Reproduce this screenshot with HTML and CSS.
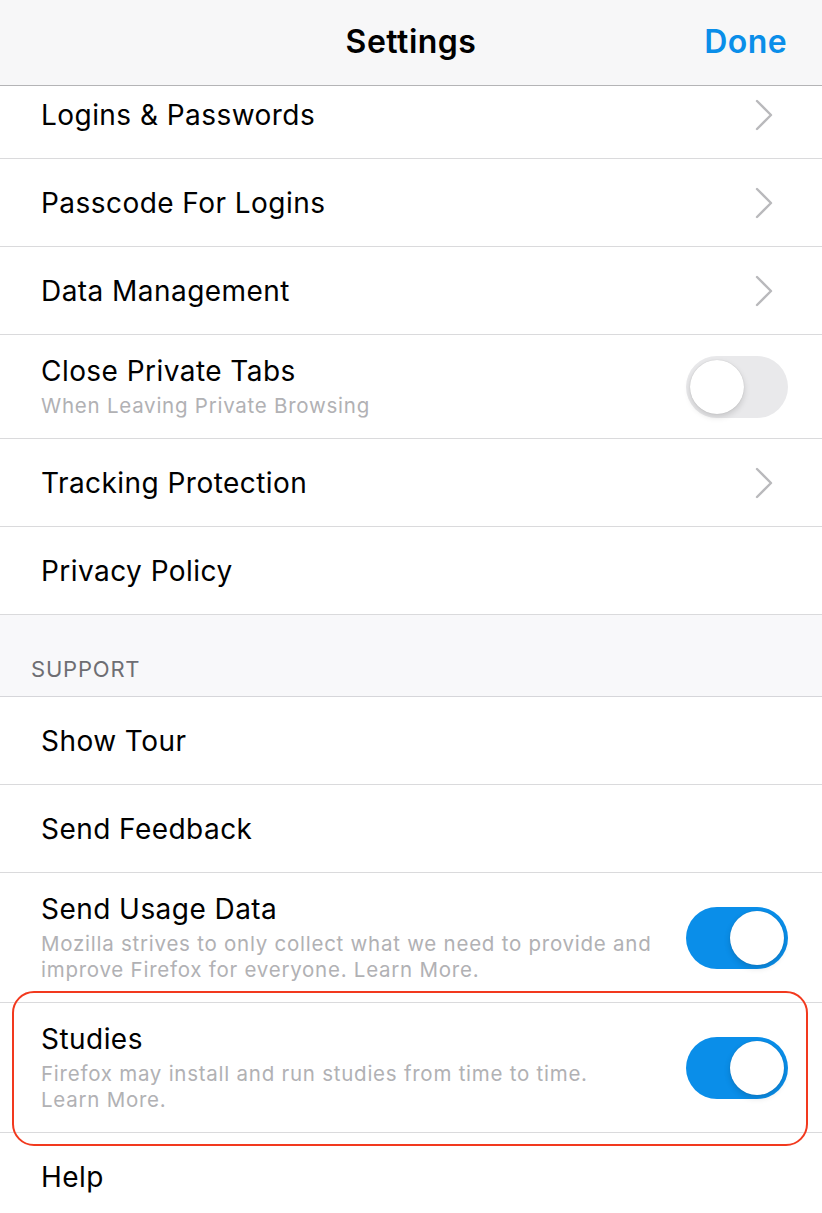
FILE: index.html
```html
<!DOCTYPE html>
<html lang="en">
<head>
<meta charset="utf-8">
<title>Settings</title>
<link rel="stylesheet" href="styles.css">
</head>
<body>
<div class="screen">
  <header class="navbar">
    <div class="nav-side"></div>
    <h1 class="nav-title">Settings</h1>
    <div class="nav-side nav-right"><span class="nav-done">Done</span></div>
  </header>
  <main class="viewport">
    <div class="list">
      <div class="row"><span class="row-title">Logins &amp; Passwords</span><svg class="chevron" viewBox="0 0 18 32"><path d="M2 2 L16 16 L2 30" /></svg></div>
      <div class="row"><span class="row-title">Passcode For Logins</span><svg class="chevron" viewBox="0 0 18 32"><path d="M2 2 L16 16 L2 30" /></svg></div>
      <div class="row"><span class="row-title">Data Management</span><svg class="chevron" viewBox="0 0 18 32"><path d="M2 2 L16 16 L2 30" /></svg></div>
      <div class="row row-sub">
        <div class="row-text"><span class="row-title">Close Private Tabs</span><span class="row-subtitle">When Leaving Private Browsing</span></div>
        <span class="toggle"><span class="knob"></span></span>
      </div>
      <div class="row"><span class="row-title">Tracking Protection</span><svg class="chevron" viewBox="0 0 18 32"><path d="M2 2 L16 16 L2 30" /></svg></div>
      <div class="row"><span class="row-title">Privacy Policy</span></div>
      <div class="section-header">SUPPORT</div>
      <div class="row"><span class="row-title">Show Tour</span></div>
      <div class="row"><span class="row-title">Send Feedback</span></div>
      <div class="row row-sub">
        <div class="row-text"><span class="row-title">Send Usage Data</span><span class="row-subtitle">Mozilla strives to only collect what we need to provide and<br>improve Firefox for everyone. Learn More.</span></div>
        <span class="toggle toggle-on"><span class="knob"></span></span>
      </div>
      <div class="row row-sub row-highlight">
        <div class="row-text"><span class="row-title">Studies</span><span class="row-subtitle">Firefox may install and run studies from time to time.<br>Learn More.</span></div>
        <span class="toggle toggle-on"><span class="knob"></span></span>
        <span class="highlight-ring"></span>
      </div>
      <div class="row"><span class="row-title">Help</span></div>
    </div>
  </main>
</div>
</body>
</html>
```
FILE: styles.css
```css
* { box-sizing: border-box; }
html, body { margin: 0; padding: 0; }
body {
  width: 822px;
  height: 1213px;
  overflow: hidden;
  background: #ffffff;
  font-family: Inter, "Liberation Sans", sans-serif;
  color: #000;
}
.screen { display: flex; flex-direction: column; height: 1213px; }
.navbar {
  height: 86px;
  flex: 0 0 86px;
  background: #f7f7f8;
  border-bottom: 1px solid #b4b4b6;
  display: flex;
  align-items: center;
  padding: 0 35px 2px 35px;
}
.nav-side { flex: 1; display: flex; }
.nav-right { justify-content: flex-end; }
.nav-title {
  margin: 0;
  font-size: 32px;
  font-weight: 600;
  letter-spacing: 0.5px;
  color: #000;
}
.nav-done {
  font-size: 32px;
  font-weight: 600;
  color: #0a8ee9;
  letter-spacing: 0.4px;
}
.viewport { flex: 1; overflow: hidden; }
.list { margin-top: -15px; }
.row {
  position: relative;
  height: 88px;
  border-bottom: 1px solid #dadadc;
  display: flex;
  align-items: center;
  justify-content: space-between;
  padding: 0 34px 0 41px;
  background: #fff;
}
.row-title {
  font-size: 28px;
  line-height: 34px;
  letter-spacing: 0.45px;
  color: #000;
}
.row-sub {
  height: auto;
  align-items: center;
  padding-top: 19px;
  padding-bottom: 19px;
}
.row-text { display: flex; flex-direction: column; }
.row-subtitle {
  margin-top: 5px;
  font-size: 20.5px;
  line-height: 26px;
  letter-spacing: 0.75px;
  color: #b1b1b4;
  white-space: nowrap;
}
.chevron {
  width: 18px;
  height: 32px;
  margin-right: 15px;
  fill: none;
  stroke: #b9b9bc;
  stroke-width: 2.4;
  stroke-linecap: round;
  stroke-linejoin: round;
}
.toggle {
  flex: 0 0 auto;
  position: relative;
  width: 102px;
  height: 62px;
  border-radius: 31px;
  background: #e9e9eb;
}
.toggle .knob {
  position: absolute;
  top: 4px;
  left: 4px;
  width: 54px;
  height: 54px;
  border-radius: 50%;
  background: #fff;
  box-shadow: 0 3px 6px rgba(0,0,0,0.15), 0 0 1px rgba(0,0,0,0.2);
}
.toggle-on { background: #0a8ee9; }
.toggle-on .knob { left: 44px; }
.section-header {
  background: #f8f8fa;
  height: 82px;
  border-bottom: 1px solid #d6d6da;
  padding: 41px 31px 0 31px;
  font-size: 22px;
  line-height: 26px;
  letter-spacing: 0.8px;
  color: #6e6e73;
}
.row-highlight { z-index: 2; background: transparent; }
.highlight-ring {
  position: absolute;
  top: -12px;
  bottom: -14px;
  left: 12px;
  right: 14px;
  border: 2.5px solid #f2391e;
  border-radius: 22px;
  pointer-events: none;
}
```
